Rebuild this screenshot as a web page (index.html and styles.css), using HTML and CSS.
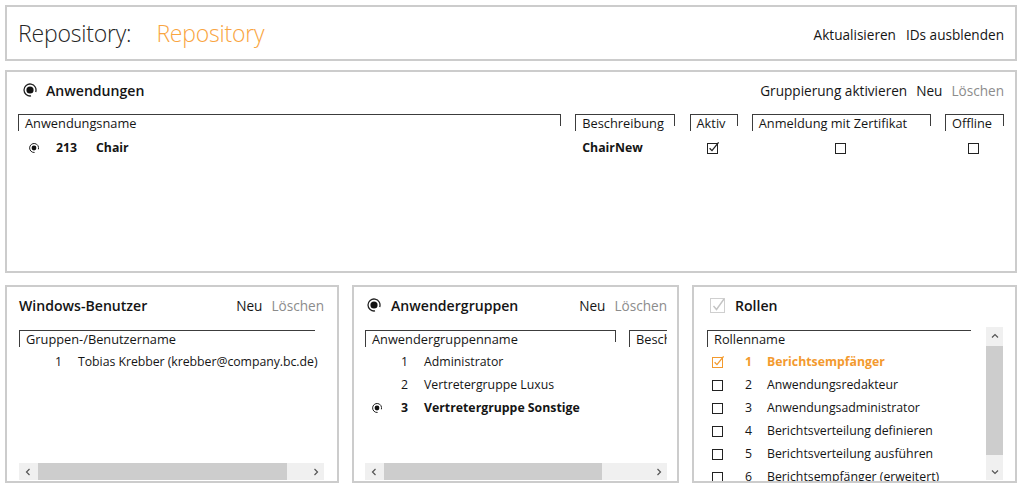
FILE: index.html
```html
<!DOCTYPE html>
<html lang="de">
<head>
<meta charset="utf-8">
<title>Repository</title>
<link rel="stylesheet" href="styles.css">
</head>
<body>
<div class="app">
  <header class="panel top">
    <h1 class="title"><span class="lbl">Repository:</span><span class="val">Repository</span></h1>
    <nav class="actions"><span>Aktualisieren</span><span>IDs ausblenden</span></nav>
  </header>

  <section class="panel apps">
    <div class="phead">
      <svg class="bigradio" width="14" height="14" viewBox="0 0 14 14"><path d="M8.04 12.91 A6 6 0 1 1 12.64 9.05" fill="none" stroke="#222" stroke-width="1.3"/><circle cx="7" cy="7" r="3.6" fill="#111"/></svg>
      <span class="ptitle">Anwendungen</span>
      <span class="spacer"></span>
      <nav class="pactions"><span>Gruppierung aktivieren</span><span>Neu</span><span class="dis">Löschen</span></nav>
    </div>
    <div class="agrid">
      <div class="colh">Anwendungsname</div>
      <div class="colh">Beschreibung</div>
      <div class="colh">Aktiv</div>
      <div class="colh">Anmeldung mit Zertifikat</div>
      <div class="colh">Offline</div>

      <div class="cell first">
        <span class="mk mk-app"><svg width="10" height="10" viewBox="0 0 10 10"><path d="M5.6 9.45 A4.5 4.5 0 1 1 9.4 6.3" fill="none" stroke="#222" stroke-width="1"/><circle cx="5" cy="5" r="2.4" fill="#111"/></svg></span>
        <b class="num num-app">213</b><b>Chair</b>
      </div>
      <div class="cell desc"><b>ChairNew</b></div>
      <div class="cell center"><svg class="cb" width="13" height="13" viewBox="0 0 13 13"><rect x="0.5" y="2.5" width="10" height="10" fill="none" stroke="#222"/><path d="M2.6 7.2 L5 9.6 L11.6 1.4" fill="none" stroke="#222" stroke-width="1.3"/></svg></div>
      <div class="cell center"><svg class="cb" width="13" height="13" viewBox="0 0 13 13"><rect x="0.5" y="2.5" width="10" height="10" fill="none" stroke="#222"/></svg></div>
      <div class="cell center"><svg class="cb" width="13" height="13" viewBox="0 0 13 13"><rect x="0.5" y="2.5" width="10" height="10" fill="none" stroke="#222"/></svg></div>
    </div>
  </section>

  <div class="bottom">
    <section class="panel bp bp1">
      <div class="phead">
        <span class="ptitle">Windows-Benutzer</span>
        <span class="spacer"></span>
        <nav class="pactions"><span>Neu</span><span class="dis">Löschen</span></nav>
      </div>
      <div class="listwrap">
        <div class="colh open">Gruppen-/Benutzername</div>
        <div class="row"><span class="mk"></span><span class="num">1</span><span class="txt tight">Tobias Krebber (krebber@company.bc.de)</span></div>
      </div>
      <div class="hscroll">
        <span class="arr"><svg width="8" height="8" viewBox="0 0 8 8"><path d="M5.5 1 L2.5 4 L5.5 7" fill="none" stroke="#555" stroke-width="1.2"/></svg></span>
        <span class="track"><span class="thumb" style="width:249px"></span></span>
        <span class="arr"><svg width="8" height="8" viewBox="0 0 8 8"><path d="M2.5 1 L5.5 4 L2.5 7" fill="none" stroke="#555" stroke-width="1.2"/></svg></span>
      </div>
    </section>

    <section class="panel bp bp2">
      <div class="phead">
        <svg class="bigradio" width="14" height="14" viewBox="0 0 14 14"><path d="M8.04 12.91 A6 6 0 1 1 12.64 9.05" fill="none" stroke="#222" stroke-width="1.3"/><circle cx="7" cy="7" r="3.6" fill="#111"/></svg>
        <span class="ptitle">Anwendergruppen</span>
        <span class="spacer"></span>
        <nav class="pactions"><span>Neu</span><span class="dis">Löschen</span></nav>
      </div>
      <div class="listwrap">
        <div class="ghead"><div class="colh">Anwendergruppenname</div><div class="colh">Beschreibung</div></div>
        <div class="row"><span class="mk"></span><span class="num">1</span><span class="txt">Administrator</span></div>
        <div class="row"><span class="mk"></span><span class="num">2</span><span class="txt">Vertretergruppe Luxus</span></div>
        <div class="row sel"><span class="mk"><svg width="10" height="10" viewBox="0 0 10 10"><path d="M5.6 9.45 A4.5 4.5 0 1 1 9.4 6.3" fill="none" stroke="#222" stroke-width="1"/><circle cx="5" cy="5" r="2.4" fill="#111"/></svg></span><span class="num">3</span><span class="txt">Vertretergruppe Sonstige</span></div>
      </div>
      <div class="hscroll">
        <span class="arr"><svg width="8" height="8" viewBox="0 0 8 8"><path d="M5.5 1 L2.5 4 L5.5 7" fill="none" stroke="#555" stroke-width="1.2"/></svg></span>
        <span class="track"><span class="thumb" style="width:218px"></span></span>
        <span class="arr"><svg width="8" height="8" viewBox="0 0 8 8"><path d="M2.5 1 L5.5 4 L2.5 7" fill="none" stroke="#555" stroke-width="1.2"/></svg></span>
      </div>
    </section>

    <section class="panel bp bp3">
      <div class="phead">
        <svg class="bigcb" width="17" height="17" viewBox="0 0 17 17"><rect x="0.5" y="1.5" width="14" height="14" fill="none" stroke="#cfcfcf"/><path d="M3.5 9 L6.5 12.5 L14 2" fill="none" stroke="#c4c4c4" stroke-width="1.4"/></svg>
        <span class="ptitle">Rollen</span>
      </div>
      <div class="rbody">
        <div class="listwrap">
          <div class="colh">Rollenname</div>
          <div class="row checked"><span class="mk"><svg class="cb" width="13" height="13" viewBox="0 0 13 13"><rect x="0.5" y="2.5" width="10" height="10" fill="none" stroke="#f39a2e"/><path d="M2.6 7.2 L5 9.6 L11.6 1.4" fill="none" stroke="#f39a2e" stroke-width="1.3"/></svg></span><span class="num">1</span><span class="txt">Berichtsempfänger</span></div>
          <div class="row"><span class="mk"><svg class="cb" width="13" height="13" viewBox="0 0 13 13"><rect x="0.5" y="2.5" width="10" height="10" fill="none" stroke="#222"/></svg></span><span class="num">2</span><span class="txt">Anwendungsredakteur</span></div>
          <div class="row"><span class="mk"><svg class="cb" width="13" height="13" viewBox="0 0 13 13"><rect x="0.5" y="2.5" width="10" height="10" fill="none" stroke="#222"/></svg></span><span class="num">3</span><span class="txt">Anwendungsadministrator</span></div>
          <div class="row"><span class="mk"><svg class="cb" width="13" height="13" viewBox="0 0 13 13"><rect x="0.5" y="2.5" width="10" height="10" fill="none" stroke="#222"/></svg></span><span class="num">4</span><span class="txt">Berichtsverteilung definieren</span></div>
          <div class="row"><span class="mk"><svg class="cb" width="13" height="13" viewBox="0 0 13 13"><rect x="0.5" y="2.5" width="10" height="10" fill="none" stroke="#222"/></svg></span><span class="num">5</span><span class="txt">Berichtsverteilung ausführen</span></div>
          <div class="row"><span class="mk"><svg class="cb" width="13" height="13" viewBox="0 0 13 13"><rect x="0.5" y="2.5" width="10" height="10" fill="none" stroke="#222"/></svg></span><span class="num">6</span><span class="txt">Berichtsempfänger (erweitert)</span></div>
        </div>
        <div class="vscroll">
          <span class="varr"><svg width="8" height="8" viewBox="0 0 8 8"><path d="M1 5.5 L4 2.5 L7 5.5" fill="none" stroke="#555" stroke-width="1.2"/></svg></span>
          <span class="vtrack"><span class="vthumb"></span></span>
          <span class="varr"><svg width="8" height="8" viewBox="0 0 8 8"><path d="M1 2.5 L4 5.5 L7 2.5" fill="none" stroke="#555" stroke-width="1.2"/></svg></span>
        </div>
      </div>
    </section>
  </div>
</div>
</body>
</html>
```

FILE: styles.css
```css
* { box-sizing: border-box; }
html, body { margin: 0; padding: 0; background: #fff; }
body {
  font-family: "Open Sans", "Noto Sans", sans-serif;
  font-size: 12.3px;
  color: #151515;
  overflow: hidden;
}
.app {
  display: flex;
  flex-direction: column;
  padding: 5px 7px 0 5px;
  height: 488px;
}
.panel {
  border: 2px solid #cccccc;
  background: #fff;
}

/* top bar */
.top {
  height: 56px;
  display: flex;
  align-items: center;
  justify-content: space-between;
  padding: 0 11px 0 11px;
}
.title {
  margin: 0;
  font-size: 23px;
  font-weight: 300;
  display: flex;
  gap: 25px;
  letter-spacing: -0.2px;
}
.title .lbl { color: #262626; }
.title .val { color: #f9a541; }
.actions { display: flex; gap: 10px; font-size: 13.6px; padding-top: 2px; }

/* panel header */
.phead {
  display: flex;
  align-items: center;
  height: 20px;
}
.ptitle { font-weight: 600; font-size: 14.1px; }
.spacer { flex: 1; }
.pactions { display: flex; gap: 9px; font-size: 13.6px; }
.dis { color: #8c8c8c; }
.bigradio { margin-right: 9px; }
.bigcb { margin-right: 8px; }

/* applications panel */
.apps {
  margin-top: 9px;
  height: 203px;
  padding: 8px 11px 0 11px;
}
.apps .bigradio { margin-left: 5px; }
.agrid {
  margin-top: 14px;
  display: grid;
  grid-template-columns: 543px 100px 48px 179px 59px;
  justify-content: space-between;
  grid-template-rows: 16px 23px;
  row-gap: 6px;
}
.colh {
  position: relative;
  border-top: 1px solid #3c3c3c;
  border-left: 1px solid #3c3c3c;
  height: 17px;
  line-height: 16px;
  font-size: 12.8px;
  padding-left: 6px;
  white-space: nowrap;
  overflow: hidden;
}
.colh::after {
  content: "";
  position: absolute;
  right: 0;
  top: 0;
  width: 1px;
  height: 11px;
  background: #3c3c3c;
}
.colh.open::after { display: none; }
.cell {
  display: flex;
  align-items: center;
  white-space: nowrap;
}
.cell.desc { padding-left: 7px; }
.cell.center { justify-content: center; }
.cell b { font-weight: 700; }
.mk { display: inline-flex; align-items: center; flex: none; }
.mk-app { width: 38px; padding-left: 11px; }
.num-app { width: 40px; }

/* bottom panels */
.bottom {
  margin-top: 12px;
  display: flex;
  gap: 13px;
  height: 198px;
}
.bp {
  display: flex;
  flex-direction: column;
  padding: 8px 13px 1px 12px;
  overflow: hidden;
}
.bp1 { width: 334px; }
.bp2 { width: 327px; padding-left: 11px; padding-right: 10px; }
.bp3 { width: 325px; padding-left: 13px; padding-right: 12px; padding-bottom: 0; }
.bp2 .bigradio { margin-left: 2px; margin-right: 10px; }
.bp3 .bigcb { margin-left: 3px; }

.listwrap {
  flex: 1;
  margin-top: 15px;
  overflow: hidden;
  min-width: 0;
}
.bp1 .colh { width: 296px; }
.ghead {
  display: grid;
  grid-template-columns: 251px 100px;
  column-gap: 13px;
}
.row {
  display: flex;
  align-items: center;
  height: 23px;
  white-space: nowrap;
}
.listwrap .colh + .row,
.ghead + .row { margin-top: 3px; }
.row .mk { width: 36px; padding-left: 7px; }
.row .num { width: 23px; }
.row.sel { font-weight: 700; }
.txt.tight { letter-spacing: -0.04px; }
.bp3 .row .mk { width: 38px; padding-left: 5px; }
.bp3 .row .num { width: 22px; }
.row.checked { color: #f39a2e; font-weight: 700; }
.bp3 .colh { width: 265px; }

/* horizontal scroll bar */
.hscroll {
  display: flex;
  height: 17px;
  background: #f0f0f0;
  flex: none;
}
.arr {
  width: 17px;
  display: flex;
  align-items: center;
  justify-content: center;
  flex: none;
}
.track { flex: 1; display: flex; align-items: center; padding-left: 2px; }
.thumb { height: 17px; background: #cdcdcd; display: block; }

/* rollen body with vertical scroll */
.rbody {
  flex: 1;
  display: flex;
  min-height: 0;
  overflow: hidden;
}
.rbody .listwrap { margin-top: 15px; }
.vscroll {
  width: 17px;
  margin-left: 15px;
  margin-top: 12px;
  height: 153px;
  background: #f0f0f0;
  display: flex;
  flex-direction: column;
  flex: none;
}
.varr { height: 17px; display: flex; align-items: center; justify-content: center; }
.vtrack { flex: 1; padding-top: 2px; }
.vthumb { display: block; height: 109px; background: #cdcdcd; }
```
